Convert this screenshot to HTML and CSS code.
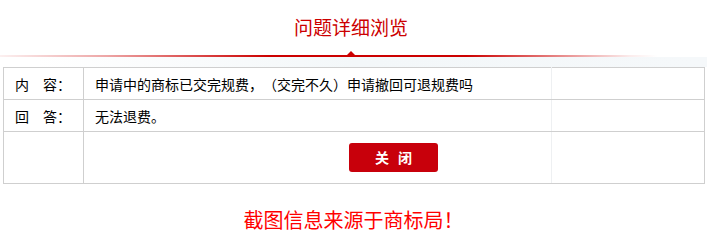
FILE: index.html
```html
<!DOCTYPE html>
<html lang="zh-CN">
<head>
<meta charset="utf-8">
<title>问题详细浏览</title>
<link rel="stylesheet" href="styles.css">
</head>
<body>
<div class="page">
  <h1 class="title">问题详细浏览</h1>
  <div class="divider"></div>
  <div class="band"></div>
  <table class="detail">
    <colgroup>
      <col class="w1"><col class="w2"><col class="w3">
    </colgroup>
    <tr class="row">
      <td class="c1">内　容：</td>
      <td class="c2">申请中的商标已交完规费，（交完不久）申请撤回可退规费吗</td>
      <td class="c3"></td>
    </tr>
    <tr class="row">
      <td class="c1">回　答：</td>
      <td class="c2">无法退费。</td>
      <td class="c3"></td>
    </tr>
    <tr class="row-btn">
      <td class="c1"></td>
      <td class="c2"><button class="close-btn" type="button">关 闭</button></td>
      <td class="c3"></td>
    </tr>
  </table>
  <p class="source">截图信息来源于商标局！</p>
</div>
</body>
</html>
```

FILE: styles.css
```css
html, body {
  margin: 0;
  padding: 0;
  background: #fff;
}
body {
  font-family: "Noto Sans CJK SC", "Liberation Sans", sans-serif;
  color: #000;
  text-spacing-trim: space-all;
}
.page {
  width: 707px;
}
.title {
  margin: 0;
  padding-top: 14px;
  padding-right: 5px;
  font-size: 19px;
  line-height: 26px;
  font-weight: normal;
  color: #cc0000;
  text-align: center;
}
.divider {
  position: relative;
  margin-top: 15px;
  height: 2px;
  background: linear-gradient(to right,
    rgba(204,0,0,0.06) 0%,
    rgba(204,0,0,0.35) 15%,
    #cc0000 38%,
    #cc0000 66%,
    rgba(204,0,0,0.35) 82%,
    rgba(204,0,0,0.08) 89%,
    rgba(204,0,0,0) 93%);
}
.divider::after {
  content: "";
  position: absolute;
  left: 347px;
  top: -4px;
  width: 0;
  height: 0;
  border-left: 4px solid transparent;
  border-right: 4px solid transparent;
  border-bottom: 4px solid #cc0000;
}
.band {
  height: 10px;
  background: linear-gradient(to right, rgba(240,245,248,0) 5%, #f3f7f9 50%, #f5f8fa 100%);
}
.detail {
  margin: 0 0 0 3px;
  width: 701px;
  table-layout: fixed;
  border-collapse: collapse;
  font-size: 14px;
}
.w1 { width: 80px; }
.w2 { width: 468px; }
.w3 { width: 153px; }
.detail td {
  border: 1px solid #cfcfcf;
  padding: 0 0 0 11px;
  vertical-align: middle;
  white-space: nowrap;
}
.detail td.c2 {
  border-right-color: #eef0f2;
}
.row td {
  height: 31px;
}
.row-btn td {
  height: 51px;
}
.close-btn {
  display: block;
  margin-left: 254px;
  width: 89px;
  height: 29px;
  padding: 0;
  border: 0;
  border-radius: 3px;
  background: #c8000b;
  color: #fff;
  font-family: "Noto Sans CJK SC", sans-serif;
  font-size: 14px;
  font-weight: bold;
  word-spacing: 6px;
  line-height: 29px;
}
.source {
  margin: 22px 0 0;
  font-size: 20px;
  line-height: 28px;
  color: #ff0000;
  text-align: center;
}
```
